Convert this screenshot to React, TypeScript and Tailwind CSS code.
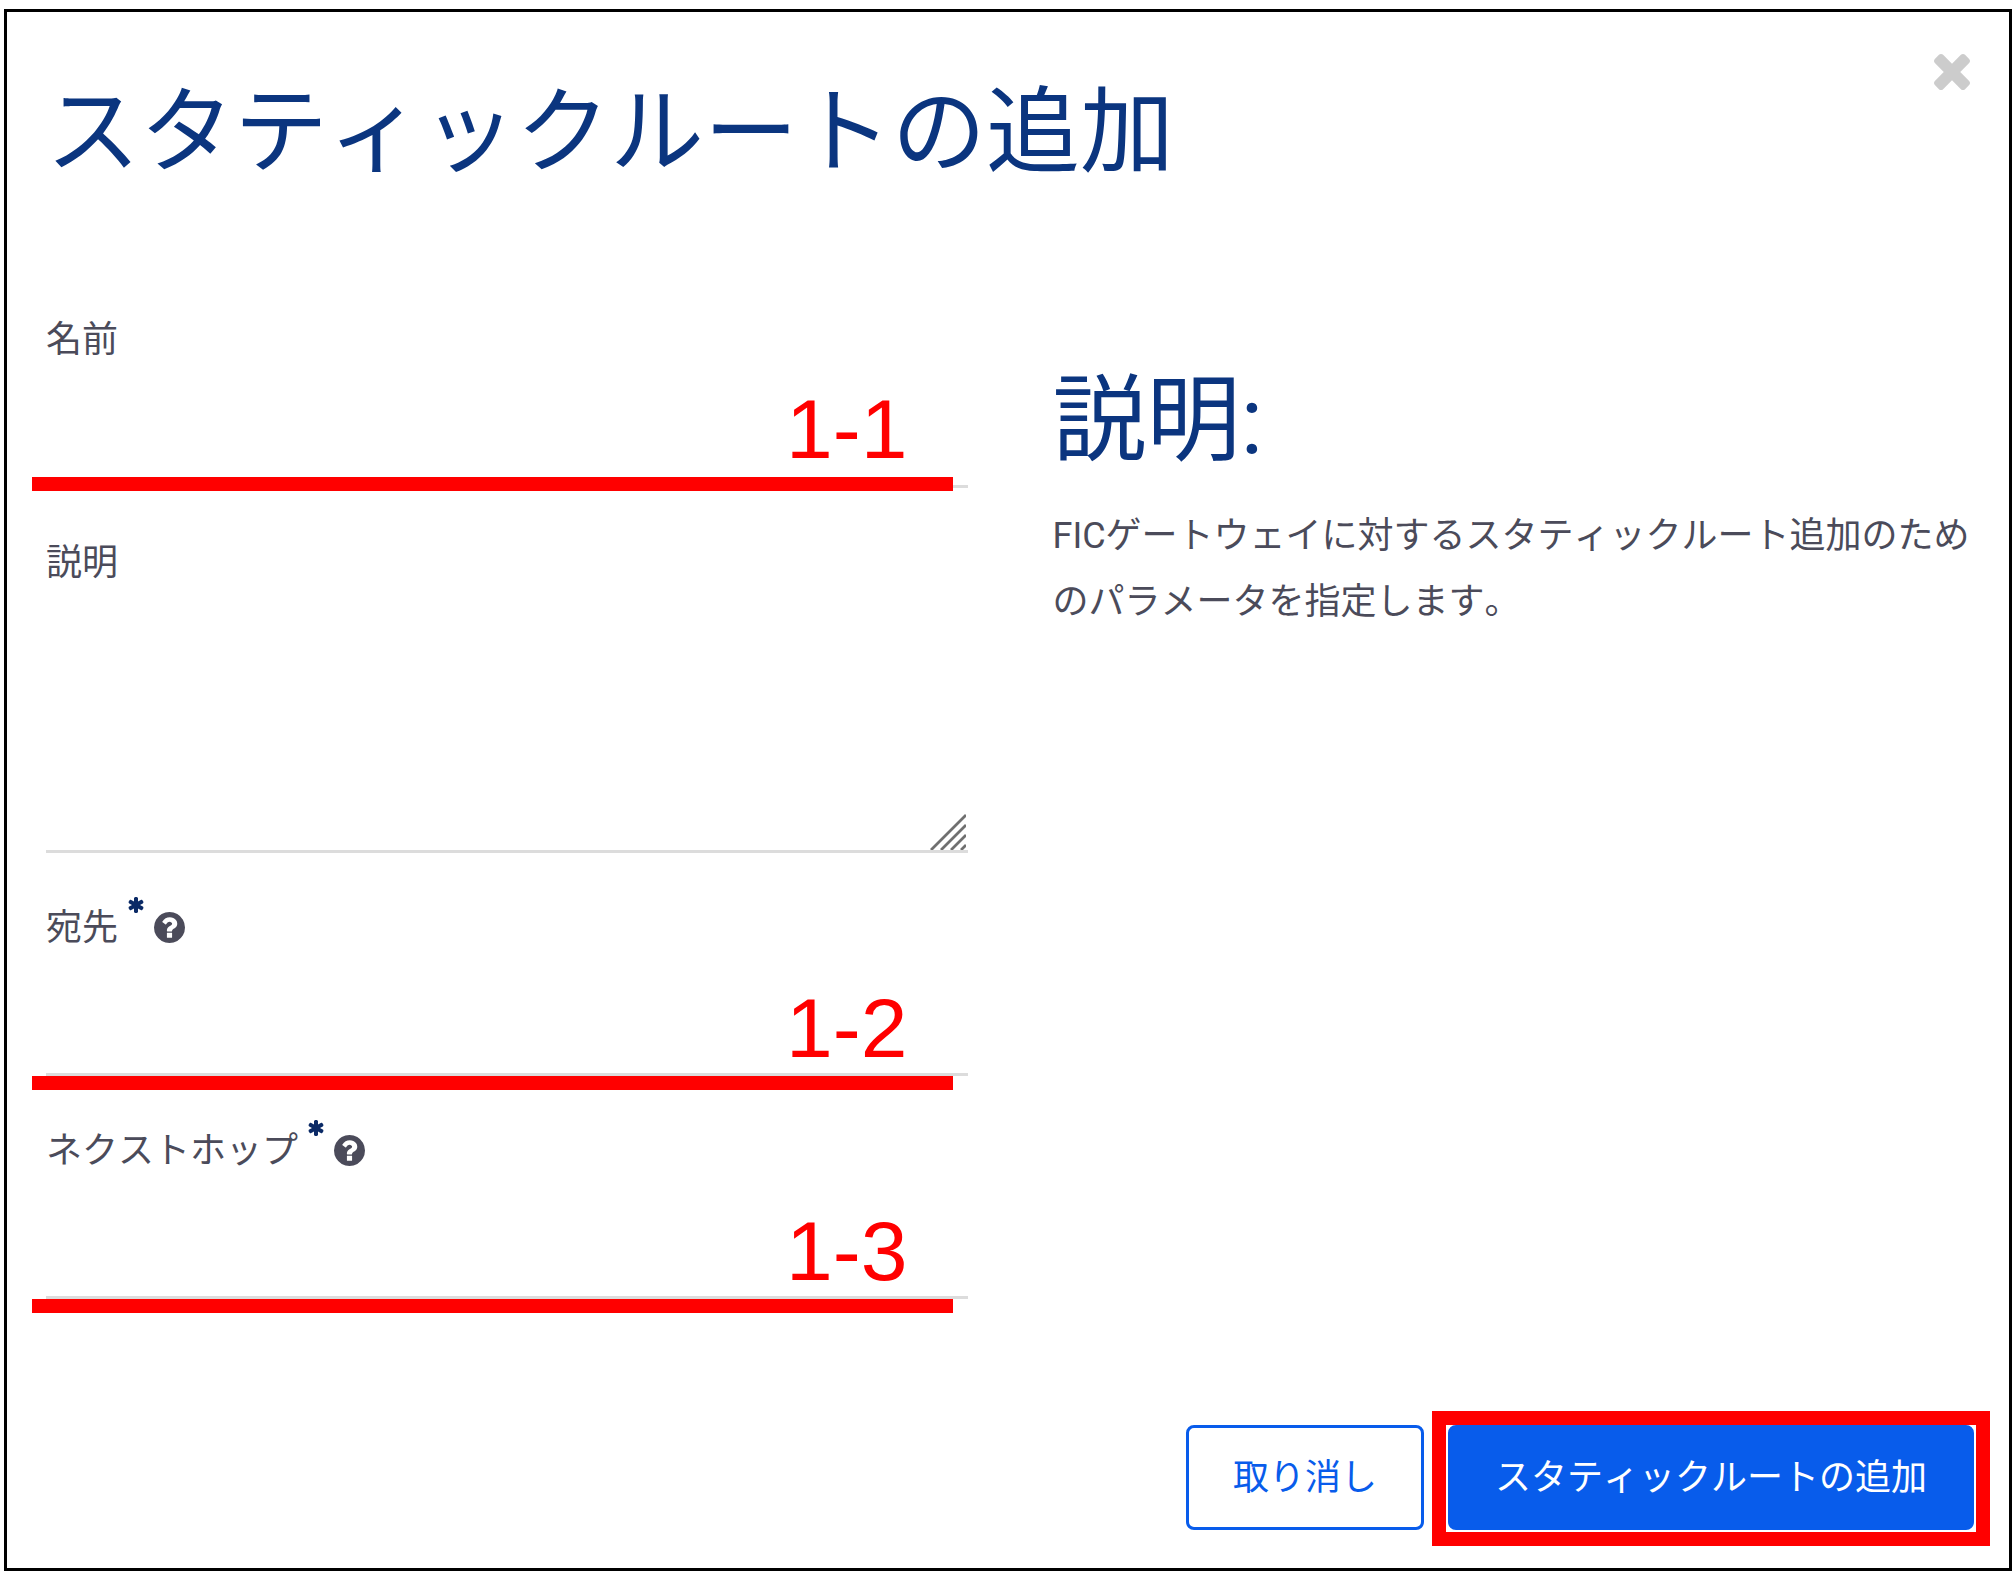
import { useState } from "react";
import type { ReactNode } from "react";

const CloseIcon = () => (
  <svg viewBox="110 366 1188 1188" className="size-9" fill="currentColor" aria-hidden="true">
    <path d="M1298 1322q0 40-28 68l-136 136q-28 28-68 28t-68-28l-294-294-294 294q-28 28-68 28t-68-28l-136-136q-28-28-28-68t28-68l294-294-294-294q-28-28-28-68t28-68l136-136q28-28 68-28t68 28l294 294 294-294q28-28 68-28t68 28l136 136q28 28 28 68t-28 68l-294 294 294 294q28 28 28 68z" />
  </svg>
);

const RequiredIcon = () => (
  <svg
    viewBox="64 128 1536 1536"
    className="size-4 self-start mt-0.5 text-[#0b2a66]"
    fill="currentColor"
    aria-hidden="true"
  >
    <path d="M1482 1050q46 26 59.5 77.5t-12.5 97.5l-64 110q-26 46-77.5 59.5t-97.5-12.5l-266-153v307q0 52-38 90t-90 38h-128q-52 0-90-38t-38-90v-307l-266 153q-46 26-97.5 12.5t-77.5-59.5l-64-110q-26-46-12.5-97.5t59.5-77.5l266-154-266-154q-46-26-59.5-77.5t12.5-97.5l64-110q26-46 77.5-59.5t97.5 12.5l266 153v-307q0-52 38-90t90-38h128q52 0 90 38t38 90v307l266-153q46-26 97.5-12.5t77.5 59.5l64 110q26 46 12.5 97.5t-59.5 77.5l-266 154z" />
  </svg>
);

const HelpIcon = () => (
  <svg
    viewBox="128 128 1536 1536"
    className="size-[31px] mb-0.5"
    fill="currentColor"
    aria-hidden="true"
  >
    <path d="M1024 1376v-192q0-14-9-23t-23-9h-192q-14 0-23 9t-9 23v192q0 14 9 23t23 9h192q14 0 23-9t9-23zm256-672q0-88-55.5-163t-138.5-116-170-41q-243 0-371 213-15 24 8 42l132 100q7 6 19 6 16 0 25-12 53-68 86-92 34-24 86-24 48 0 85.5 26t37.5 59q0 38-20 61t-68 45q-63 28-115.5 86.5t-52.5 125.5v36q0 14 9 23t23 9h192q14 0 23-9t9-23q0-19 21.5-49.5t54.5-49.5q32-18 49-28.5t46-35 44.5-48 28-60.5 12.5-81zm384 192q0 209-103 385.5t-279.5 279.5-385.5 103-385.5-103-279.5-279.5-103-385.5 103-385.5 279.5-279.5 385.5-103 385.5 103 279.5 279.5 103 385.5z" />
  </svg>
);

const ResizeGrip = () => (
  <svg
    viewBox="0 0 36 36"
    className="pointer-events-none absolute right-[2px] bottom-[3px] size-9"
    stroke="#707070"
    strokeWidth="2.8"
    aria-hidden="true"
  >
    <path d="M1 36 36 1M11 36 36 11M21 36 36 21M31 36 36 31" />
  </svg>
);

// Step number with the thick red rule under it
const StepMark = ({ step, raised }: { step: string; raised?: boolean }) => (
  <div
    className={`pointer-events-none absolute -left-3.5 right-[15px] flex flex-col items-end ${
      raised ? "-bottom-[3px]" : "-bottom-3.5"
    }`}
  >
    <span className="mr-[45px] mb-1.5 font-['Liberation_Sans',sans-serif] text-[84px] leading-none text-[#ff0000]">
      {step}
    </span>
    <div className="h-3.5 w-full bg-[#ff0000]" />
  </div>
);

const Field = ({
  id,
  label,
  required,
  children,
}: {
  id: string;
  label: string;
  required?: boolean;
  children: ReactNode;
}) => (
  <div>
    <label htmlFor={id} className="flex items-center gap-2.5 text-4xl leading-[66px]">
      {label}
      {required && (
        <>
          <RequiredIcon />
          <HelpIcon />
        </>
      )}
    </label>
    <div className="relative">{children}</div>
  </div>
);

const controlClass =
  "block w-full border-b-[3px] border-[#dcdcdc] bg-transparent text-4xl outline-none";

export default function App() {
  const [form, setForm] = useState({
    name: "",
    description: "",
    destination: "",
    nexthop: "",
  });

  const update = (key: keyof typeof form, value: string) =>
    setForm((prev) => ({ ...prev, [key]: value }));

  return (
    <main className="min-h-screen bg-white pt-[9px] pr-1 pb-[5px] pl-1 font-[Roboto,'Noto_Sans_CJK_JP',sans-serif] text-[#4b4b5a] [font-kerning:none]">
      <form
        className="relative border-[3px] border-black pt-[65px] pr-[35px] pb-[38px] pl-[39px]"
        onSubmit={(e) => e.preventDefault()}
      >
        <button
          type="button"
          aria-label="閉じる"
          className="absolute top-[42px] right-[39px] text-[#cccccc]"
        >
          <CloseIcon />
        </button>

        <h1 className="text-[94px] leading-[112px] text-[#0b357f]">スタティックルートの追加</h1>

        <div className="mt-[118px] grid grid-cols-2 gap-x-[85px]">
          <div className="flex flex-col gap-[42px]">
            <Field id="name" label="名前">
              <input
                id="name"
                type="text"
                className={`${controlClass} h-[115px]`}
                value={form.name}
                onChange={(e) => update("name", e.target.value)}
              />
              <StepMark step="1-1" raised />
            </Field>

            <Field id="description" label="説明">
              <textarea
                id="description"
                className={`${controlClass} h-[257px] resize-none`}
                value={form.description}
                onChange={(e) => update("description", e.target.value)}
              />
              <ResizeGrip />
            </Field>

            <Field id="destination" label="宛先" required>
              <input
                id="destination"
                type="text"
                className={`${controlClass} h-[115px]`}
                value={form.destination}
                onChange={(e) => update("destination", e.target.value)}
              />
              <StepMark step="1-2" />
            </Field>

            <Field id="nexthop" label="ネクストホップ" required>
              <input
                id="nexthop"
                type="text"
                className={`${controlClass} h-[115px]`}
                value={form.nexthop}
                onChange={(e) => update("nexthop", e.target.value)}
              />
              <StepMark step="1-3" />
            </Field>
          </div>

          <div className="pt-[58px]">
            <h2 className="text-[94px] leading-[112px] text-[#0b357f]">説明:</h2>
            <p className="mt-[26px] text-4xl leading-[66px]">
              FICゲートウェイに対するスタティックルート追加のためのパラメータを指定します。
            </p>
          </div>
        </div>

        <div className="mt-[126px] flex justify-end gap-6">
          <button
            type="button"
            className="h-[105px] rounded-lg border-[3px] border-[#085ceb] px-11 text-4xl text-[#085ceb]"
          >
            取り消し
          </button>
          <div className="relative">
            <button
              type="submit"
              className="h-[105px] rounded-lg border-[3px] border-[#085ceb] bg-[#085ceb] px-11 text-4xl text-white"
            >
              スタティックルートの追加
            </button>
            <div className="pointer-events-none absolute -inset-4 -top-3.5 border-[14px] border-[#ff0000]" />
          </div>
        </div>
      </form>
    </main>
  );
}
